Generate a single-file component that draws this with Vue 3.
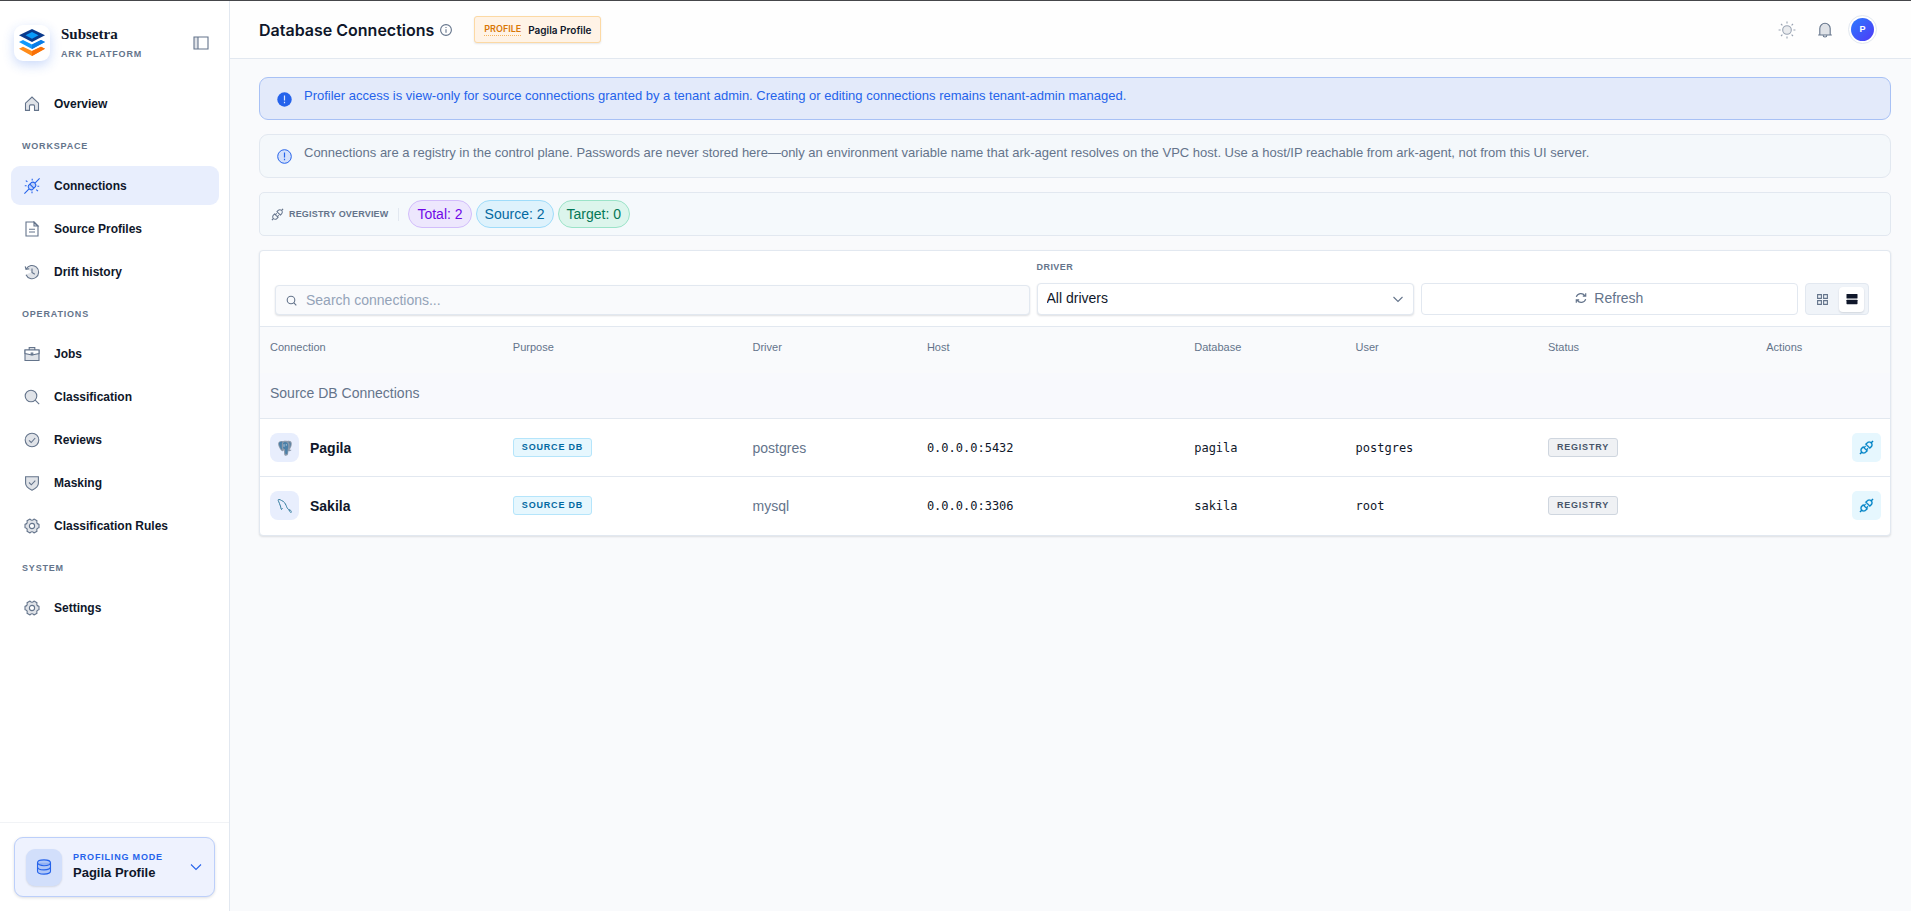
<script setup>
import { ref } from 'vue'

const search = ref('')
const driver = ref('all')

const navGroups = [
  { label: '', items: [{ name: 'Overview', icon: 'home' }] },
  {
    label: 'Workspace',
    items: [
      { name: 'Connections', icon: 'plug', active: true },
      { name: 'Source Profiles', icon: 'file' },
      { name: 'Drift history', icon: 'history' },
    ],
  },
  {
    label: 'Operations',
    items: [
      { name: 'Jobs', icon: 'jobs' },
      { name: 'Classification', icon: 'search' },
      { name: 'Reviews', icon: 'check' },
      { name: 'Masking', icon: 'shield' },
      { name: 'Classification Rules', icon: 'gear' },
    ],
  },
  { label: 'System', items: [{ name: 'Settings', icon: 'gear' }] },
]

const gear =
  '<path class="tone" fill-rule="evenodd" stroke-linejoin="round" d="M15 6.3V9.7Q12 10.3 13 13.2L10 14.900Q8 12.700 6 14.900L3 13.200Q4 10.300 1 9.700V6.300Q4 5.700 3 2.800L6 1.100Q8 3.300 10 1.100L13 2.800Q12 5.700 15 6.300zM8 5.400a2.600 2.600 0 1 0 0 5.200 2.600 2.600 0 0 0 0-5.200z"/>'

const icons = {
  home: '<path class="tone" d="M1.5 14.4V7.2L8 1.1l6.5 6.1v7.2h-4V9.9a1 1 0 0 0-1-1h-3a1 1 0 0 0-1 1v4.5z"/>',
  plug: '<path d="M.4 15.6 4.8 11.2M11.2 4.8 15.600.4"/><path class="tone" d="M4.6 7.3 7.3 4.6a3 3 0 0 1 4.100 4.100l-2.700 2.700a3 3 0 0 1-4.100-4.100z"/><path d="M5.800 6.200l4 4"/><path d="M1.800 2.600l1.600 1.200M.8 7.800h1.800M8.200.8v1.800M14 13.200l-1.800-1.600M15.200 8.200h-1.800M8 15.200v-1.800"/>',
  file: '<path d="M2 1h8l4 4v10H2z"/><path class="tone" d="M10 1v4h4z"/><path d="M5 8.2h6M5 11h6"/>',
  history: '<path class="tone" d="M2.3 4.8A6.5 6.5 0 1 1 2 10.6L8 8z" stroke="none"/><path d="M2.3 4.8A6.6 6.6 0 1 1 2 10.8M1.2 2.4l.8 3 3.2-.6M8 4.6V8.4l2.8 1.8"/>',
  jobs: '<path class="tone" d="M1 4h14v10.5H1z"/><path class="blank" d="M1 4h14v3.6L8 9 1 7.6z"/><path d="M5.2 4V1.6h5.6V4M7.2 7h1.6v1.8H7.2z"/>',
  search: '<circle class="tone" cx="7" cy="7" r="5.8"/><path d="m11.2 11.2 4 4"/>',
  check: '<circle class="tone" cx="8" cy="8" r="6.8"/><path d="m5 8.3 2.2 2.2L11.2 6"/>',
  shield: '<path class="tone" d="M1.6 1.8h12.8v6.4c0 3.4-3 5.4-6.4 7-3.4-1.6-6.4-3.6-6.4-7z"/><path d="m5 7.5 2.3 2.3 4-4.2"/>',
  gear,
}

const columns = ['Connection', 'Purpose', 'Driver', 'Host', 'Database', 'User', 'Status', 'Actions']

const rows = [
  { name: 'Pagila', driver: 'postgres', host: '0.0.0.0:5432', database: 'pagila', user: 'postgres' },
  { name: 'Sakila', driver: 'mysql', host: '0.0.0.0:3306', database: 'sakila', user: 'root' },
]

const apiPath =
  'M917.7 148.8l-42.4-42.4c-1.6-1.6-3.6-2.3-5.7-2.3s-4.1.8-5.7 2.3l-76.1 76.1a199.27 199.27 0 00-112.1-34.3c-51.2 0-102.4 19.5-141.5 58.6L432.3 308.7a8.03 8.03 0 000 11.3L704 591.7c1.6 1.6 3.6 2.3 5.7 2.3 2 0 4.1-.8 5.7-2.3l101.9-101.9c68.9-69 77-175.7 24.3-253.5l76.1-76.1c3.1-3.2 3.1-8.3 0-11.4zM769.1 441.7l-59.4 59.4-186.8-186.8 59.4-59.4c24.9-24.9 58.1-38.7 93.4-38.7 35.3 0 68.4 13.7 93.4 38.7 24.9 24.9 38.7 58.1 38.7 93.4 0 35.3-13.8 68.4-38.7 93.4zm-190.2 105a8.03 8.03 0 00-11.3 0L501 613.3 410.7 523l66.7-66.7c3.1-3.1 3.1-8.2 0-11.3L441 408.6a8.03 8.03 0 00-11.3 0L363 475.3l-43-43a7.85 7.85 0 00-5.7-2.3c-2 0-4.1.8-5.7 2.3L206.8 534.2c-68.9 69-77 175.7-24.3 253.5l-76.1 76.1a8.03 8.03 0 000 11.3l42.4 42.4c1.6 1.6 3.6 2.3 5.7 2.3s4.1-.8 5.7-2.3l76.1-76.1c33.7 22.9 72.9 34.3 112.1 34.3 51.2 0 102.4-19.5 141.5-58.6l101.9-101.9c3.1-3.1 3.1-8.2 0-11.3l-43-43 66.7-66.7c3.1-3.1 3.1-8.2 0-11.3l-36.6-36.2zM441.7 769.1a131.32 131.32 0 01-93.2 38.7c-35.3 0-68.4-13.7-93.4-38.7a131.32 131.32 0 01-38.7-93.4c0-35.3 13.7-68.4 38.7-93.4l59.4-59.4 186.8 186.8-59.6 59.4z'
</script>

<template>
  <div class="app">
    <aside class="sidebar">
      <div class="brand">
        <div class="logo">
          <svg width="26" height="27" viewBox="0 0 26 27" aria-hidden="true">
            <path d="M0 19.800 4 17.700 13 22 22 17.700 26 19.800 13 27z" fill="#ff8c1a" />
            <path d="M13 22 22 17.700 26 19.800 13 27z" fill="#f97008" />
            <path d="M0 13 4 10.900 13 15.400 22 10.900 26 13 13 20z" fill="#1199fb" />
            <path d="M13 15.400 22 10.900 26 13 13 20z" fill="#0b7de6" />
            <path d="M0 6.200 13 0l13 6.200-13 6.900z" fill="#0a3a8c" />
            <path d="M6.500 6.200 13 2.900l6.500 3.300L13 9.800z" fill="#0a9bfa" />
          </svg>
        </div>
        <div class="brand-text">
          <strong>Subsetra</strong>
          <span class="caps">ARK PLATFORM</span>
        </div>
        <button class="bare" type="button" aria-label="Collapse sidebar">
          <svg class="ico" width="16" height="16" viewBox="0 0 16 16">
            <path class="tone" stroke="none" d="M1 2h4v12H1z" />
            <path d="M1 2h14v12H1zM5 2v12" />
          </svg>
        </button>
      </div>

      <nav>
        <template v-for="group in navGroups" :key="group.label">
          <h2 v-if="group.label" class="caps group-label">{{ group.label.toUpperCase() }}</h2>
          <ul>
            <li v-for="item in group.items" :key="item.name">
              <a href="#" :class="{ active: item.active }">
                <svg class="ico" width="16" height="16" viewBox="0 0 16 16" aria-hidden="true" v-html="icons[item.icon]"></svg>
                {{ item.name }}
              </a>
            </li>
          </ul>
        </template>
      </nav>

      <div class="mode-wrap">
        <button class="mode" type="button">
          <span class="mode-icon">
            <svg class="ico" width="16" height="16" viewBox="0 0 16 16">
              <path class="tone" d="M1.500 3.800v8.400c0 1.700 2.900 2.900 6.500 2.900s6.500-1.200 6.500-2.900V3.800" />
              <ellipse class="tone" cx="8" cy="3.800" rx="6.500" ry="2.900" />
              <path d="M1.500 8c0 1.700 2.900 2.900 6.500 2.900s6.500-1.200 6.500-2.900" />
            </svg>
          </span>
          <span class="mode-text">
            <span class="caps">PROFILING MODE</span>
            <strong>Pagila Profile</strong>
          </span>
          <svg class="ico" width="12" height="12" viewBox="0 0 12 12"><path d="m1 3.500 5 5 5-5" /></svg>
        </button>
      </div>
    </aside>

    <div class="page">
      <header class="topbar">
        <h1>Database Connections</h1>
        <button class="bare info" type="button" aria-label="About this page">
          <svg class="ico" width="12" height="12" viewBox="0 0 12 12">
            <circle cx="6" cy="6" r="5.400" /><path d="M6 5.200v3.600M6 3v1" />
          </svg>
        </button>
        <div class="profile-chip"><abbr title="Active profile">PROFILE</abbr><span>Pagila Profile</span></div>
        <div class="top-actions">
          <button class="bare sun" type="button" aria-label="Toggle theme">
            <svg class="ico" width="18" height="18" viewBox="0 0 18 18">
              <circle class="tone" cx="9" cy="9" r="4.300" />
              <path d="M9 .6v2M9 15.400v2M.6 9h2M15.400 9h2M3 3l1.400 1.400M13.600 13.600 15 15M3 15l1.400-1.400M13.600 4.400 15 3" />
            </svg>
          </button>
          <button class="bare" type="button" aria-label="Notifications">
            <svg class="ico" width="16" height="16" viewBox="0 0 16 16">
              <path class="tone" d="M1.200 13h13.600M2.800 13V6.500A5.200 5.200 0 0 1 8 1.300a5.200 5.200 0 0 1 5.200 5.200V13" />
              <path d="M6.200 13.200a1.800 1.800 0 0 0 3.600 0" />
            </svg>
          </button>
          <button class="avatar" type="button" aria-label="Account"><span>P</span></button>
        </div>
      </header>

      <main>
        <div class="alert primary" role="status">
          <svg width="15" height="15" viewBox="0 0 15 15" aria-hidden="true">
            <circle cx="7.500" cy="7.500" r="7.200" fill="#2563eb" />
            <path d="M7.500 3.600v4.800M7.500 9.800v1.500" stroke="#dbe6ff" stroke-width="1.200" />
          </svg>
          <p>Profiler access is view-only for source connections granted by a tenant admin. Creating or editing connections remains tenant-admin managed.</p>
        </div>
        <div class="alert" role="note">
          <svg width="15" height="15" viewBox="0 0 15 15" aria-hidden="true">
            <circle cx="7.500" cy="7.500" r="6.800" fill="#d3e0fb" stroke="#2563eb" />
            <path d="M7.500 3.600v4.800M7.500 9.800v1.500" stroke="#2563eb" stroke-width="1.200" />
          </svg>
          <p>Connections are a registry in the control plane. Passwords are never stored here—only an environment variable name that ark-agent resolves on the VPC host. Use a host/IP reachable from ark-agent, not from this UI server.</p>
        </div>

        <section class="overview">
          <svg width="13" height="13" viewBox="64 64 896 896" fill="#64748b" aria-hidden="true"><path :d="apiPath" /></svg>
          <h2>REGISTRY OVERVIEW</h2>
          <span class="rule"></span>
          <span class="pill violet">Total: 2</span>
          <span class="pill sky">Source: 2</span>
          <span class="pill green">Target: 0</span>
        </section>

        <section class="card">
          <div class="toolbar">
            <div class="search">
              <svg class="ico" width="11" height="11" viewBox="0 0 11 11" aria-hidden="true"><circle cx="5" cy="5" r="3.800" /><path d="m7.700 7.700 2.600 2.600" /></svg>
              <input v-model="search" type="search" placeholder="Search connections..." aria-label="Search connections" />
            </div>
            <div class="driver">
              <label for="driver">DRIVER</label>
              <div class="select">
                <select id="driver" v-model="driver">
                  <option value="all">All drivers</option>
                  <option value="postgres">postgres</option>
                  <option value="mysql">mysql</option>
                </select>
                <svg class="ico" width="12" height="12" viewBox="0 0 12 12" aria-hidden="true"><path d="m1.500 4 4.500 4.500L10.500 4" /></svg>
              </div>
            </div>
            <button class="refresh" type="button">
              <svg width="12" height="12" viewBox="0 0 12 12" fill="none" stroke="currentColor" stroke-width="1.200" aria-hidden="true">
                <path d="M1.300 4.900A4.800 4.800 0 0 1 9.800 3.700M10.700 1.200v3H7.800M10.700 7.100A4.800 4.800 0 0 1 2.200 8.300M1.300 10.800v-3h2.900" />
              </svg>
              Refresh
            </button>
            <div class="views" role="group" aria-label="View">
              <button type="button" aria-label="Grid view">
                <svg width="11" height="11" viewBox="0 0 11 11" fill="none" stroke="#64748b" stroke-width="1.100">
                  <path d="M.6.6h3.800v3.800H.6zM6.600.6h3.800v3.800H6.600zM.6 6.600h3.800v3.800H.6zM6.600 6.600h3.800v3.800H6.600z" />
                </svg>
              </button>
              <button type="button" class="on" aria-label="Table view" aria-pressed="true">
                <svg width="12" height="12" viewBox="0 0 12 12" fill="#0f172a"><rect x=".5" y="1" width="11" height="4.500" rx=".6" /><rect x=".5" y="6.700" width="11" height="4.500" rx=".6" /></svg>
              </button>
            </div>
          </div>

          <table>
            <colgroup><col v-for="c in columns" :key="c" :class="'c-' + c.toLowerCase()" /></colgroup>
            <thead>
              <tr><th v-for="c in columns" :key="c" scope="col">{{ c }}</th></tr>
            </thead>
            <tbody>
              <tr class="group"><td colspan="8">Source DB Connections</td></tr>
              <tr v-for="row in rows" :key="row.name">
                <td>
                  <div class="name">
                    <span class="db">
                      <svg v-if="row.driver === 'postgres'" width="16" height="16" viewBox="0 0 16 16" aria-hidden="true">
                        <path d="M1.200 3.200C1.600 1.200 4.400.6 6 1.200c1.400-.6 3-.6 4.200-.1 1.800-.7 4.600-.2 4.600 2.300 0 2.200-.9 4.400-2.200 6.200.6.500 1.600.2 1.900.4-.6 1-2 1.300-3.200 1.200-.1 1.700.1 3.700-1.500 4.400-1.700.6-2.700-.7-2.700-2.200l-.2-3.200c-.8.900-1.400 1.200-2 .8C3 9.600.8 5.400 1.200 3.200z" fill="#8d9aab" />
                        <path d="M2 3.300C2.400 1.900 4.300 1.500 5.500 2c-.6.900-.8 2-.7 3.200.1 1.300-.2 2.700.4 3.900-.2.500-.6.800-.8.500C3.200 7.800 1.700 5 2 3.300zM6 3.200c1-1.600 3.300-1.600 4.300-.4 1.100 1.400 1.100 4.200.6 6-.4 1.600-.1 3.600-.7 5-.6.900-1.900.5-2-.8L8 9.300C6.400 9 5.800 7.600 6 6z" fill="#4b80a8" />
                        <path d="M11.400 2c1.400-.3 2.600.2 2.600 1.600 0 1.800-.7 3.300-1.500 4.600.4-2.300.4-4.700-1.100-6.200z" fill="#5c83a3" />
                        <path d="M7 4.200v2.600M9.300 4.200v1.400" stroke="#e3ebf5" stroke-width=".7" />
                      </svg>
                      <svg v-else width="16" height="16" viewBox="0 0 16 16" fill="none" stroke="#2f7a9c" aria-hidden="true">
                        <path d="M4.500 11.500C3.600 10.600 4 9.200 3.400 8 2.600 6.500 2.400 4.600 1.500 3.200 1 2.200 1 1.300 2 1.500c1.500.1 2 .8 2.900 1.200 2 .6 3.300 2.700 4.200 4.700.7 1.700 1 3.100 2.400 4 1.500.6 2.500 1 3.200 2.100M11.800 11.800l1 1.600 1.600 1.600M4.500 11.500l.9-1.500" />
                      </svg>
                    </span>
                    <strong>{{ row.name }}</strong>
                  </div>
                </td>
                <td><span class="tag blue">SOURCE DB</span></td>
                <td class="muted">{{ row.driver }}</td>
                <td class="mono">{{ row.host }}</td>
                <td class="mono">{{ row.database }}</td>
                <td class="mono">{{ row.user }}</td>
                <td><span class="tag">REGISTRY</span></td>
                <td>
                  <button class="test" type="button" :aria-label="'Test ' + row.name">
                    <svg width="15" height="15" viewBox="64 64 896 896" fill="#0284c7" aria-hidden="true"><path :d="apiPath" stroke="#0284c7" stroke-width="16" /></svg>
                  </button>
                </td>
              </tr>
            </tbody>
          </table>
        </section>
      </main>
    </div>
  </div>
</template>

<style>
body {
  background: #f9fafc;
}
</style>

<style scoped>
.app,
.app :deep(*) {
  box-sizing: border-box;
}
.app {
  display: flex;
  min-height: 100vh;
  border-top: 1px solid #45464a;
  color: #0f172a;
  font-family: 'Liberation Sans', Arial, sans-serif;
  font-size: 14px;
}
h1, h2, p, ul {
  margin: 0;
  padding: 0;
}
ul {
  list-style: none;
}
button {
  font: inherit;
  color: inherit;
  cursor: pointer;
}
.bare {
  display: flex;
  padding: 0;
  border: 0;
  background: none;
  color: #64748b;
}
.ico {
  flex: none;
  fill: none;
  stroke: currentColor;
  stroke-width: 1.1;
}
.ico :deep(.tone),
.ico .tone {
  fill: currentColor;
  fill-opacity: 0.2;
}
.ico :deep(.blank) {
  fill: #fff;
}
.caps {
  font-size: 9px;
  font-weight: 700;
  line-height: 15px;
  letter-spacing: 0.09em;
  color: #64748b;
}

/* Sidebar */
.sidebar {
  display: flex;
  flex: none;
  flex-direction: column;
  width: 230px;
  border-right: 1px solid #e2e8f0;
  background: #fff;
}
.brand {
  display: flex;
  align-items: center;
  height: 83px;
  padding: 0 20px 0 14px;
}
.logo {
  display: grid;
  place-items: center;
  width: 36px;
  height: 36px;
  border-radius: 9px;
  background: #fff;
  box-shadow: 0 4px 12px rgba(37, 99, 235, 0.24);
}
.brand-text {
  display: flex;
  flex: 1;
  flex-direction: column;
  gap: 2px;
  margin-left: 11px;
}
.brand-text strong {
  font: 700 15px/22px 'Liberation Serif', 'Times New Roman', serif;
}
nav {
  flex: 1;
  padding: 0 10px 0 11px;
}
.group-label {
  margin: 16px 0 12px 11px;
}
nav ul {
  display: grid;
  gap: 4px;
}
nav a {
  display: flex;
  align-items: center;
  gap: 14px;
  height: 39px;
  padding: 0 13px;
  border-radius: 9px;
  color: #0f172a;
  font-size: 12px;
  font-weight: 700;
  text-decoration: none;
}
nav a .ico {
  color: #64748b;
}
nav a.active {
  background: #e8eefd;
}
nav a.active .ico {
  color: #2563eb;
}
.mode-wrap {
  padding: 14px;
  border-top: 1px solid #f1f3f6;
}
.mode {
  display: flex;
  align-items: center;
  width: 100%;
  height: 60px;
  padding: 0 12px 0 11px;
  border: 1px solid #bccffa;
  border-radius: 9px;
  background: #eef2fe;
  box-shadow: 0 1px 3px rgba(15, 23, 42, 0.14);
  color: #2563eb;
  text-align: left;
}
.mode-icon {
  display: grid;
  place-items: center;
  width: 36px;
  height: 37px;
  border-radius: 9px;
  background: #d2dffb;
  box-shadow: 0 1px 2px rgba(15, 23, 42, 0.12);
}
.mode-text {
  display: flex;
  flex: 1;
  flex-direction: column;
  margin-left: 11px;
  padding-bottom: 4px;
}
.mode-text .caps {
  color: #2563eb;
}
.mode-text strong {
  color: #0f172a;
  font-size: 13px;
  line-height: 16px;
}

/* Header */
.page {
  flex: 1;
  min-width: 0;
}
.topbar {
  display: flex;
  align-items: center;
  height: 58px;
  padding: 0 34px 0 29px;
  border-bottom: 1px solid #e2e8f0;
  background: #fefefe;
}
h1 {
  font: 600 16px/24px Inter, sans-serif;
}
.info {
  margin: 0 22px 0 6px;
}
.profile-chip {
  display: flex;
  align-items: center;
  gap: 7px;
  height: 27px;
  padding: 0 9px;
  border: 1px solid #fcd9a4;
  border-radius: 3px;
  background: #fff3e6;
  box-shadow: 0 1px 2px rgba(15, 23, 42, 0.1);
  font: 600 9px/12px Inter, sans-serif;
}
.profile-chip span {
  font-size: 10px;
}
.profile-chip abbr {
  border-bottom: 1px dotted #f5b45c;
  color: #d97706;
  text-decoration: none;
}
.top-actions {
  display: flex;
  align-items: center;
  gap: 15px;
  margin-left: auto;
}
.sun {
  margin-right: 6px;
  opacity: 0.65;
}
.avatar {
  width: 29px;
  height: 29px;
  padding: 2px;
  border: 1px solid #e2e8f0;
  border-radius: 50%;
  background: #fff;
}
.avatar span {
  display: block;
  border-radius: 50%;
  background: linear-gradient(135deg, #2b7bff, #4f39f6);
  color: #fff;
  font: 700 9px/23px 'Liberation Sans', Arial, sans-serif;
}

/* Content */
main {
  display: grid;
  gap: 14px;
  padding: 18px 20px 20px 29px;
}
.alert {
  display: flex;
  gap: 12px;
  min-height: 44px;
  padding: 9px 16px 10px 17px;
  border: 1px solid #e2e8f0;
  border-radius: 9px;
  background: #f4f8fb;
  color: #64748b;
}
.alert svg {
  flex: none;
  margin-top: 5px;
}
.alert p {
  font-size: 13px;
  line-height: 18px;
}
.alert.primary {
  min-height: 43px;
  border-color: #a8c1f5;
  background: #e3eafa;
  color: #2563eb;
}
.overview {
  display: flex;
  align-items: center;
  gap: 4px;
  min-height: 44px;
  padding: 0 11px;
  border: 1px solid #e2e8f0;
  border-radius: 5px;
  background: #f5f9fc;
}
.overview h2 {
  margin-left: 1px;
  color: #64748b;
  font-size: 9px;
  letter-spacing: 0.02em;
}
.rule {
  width: 1px;
  height: 13px;
  margin: 0 5px 0 6px;
  background: #e2e8f0;
}
.pill {
  padding: 0 8px;
  border: 1px solid;
  border-radius: 14px;
  font-size: 14px;
  line-height: 26px;
}
.violet {
  border-color: #d2bdfb;
  background: #ede7fd;
  color: #7008e7;
}
.sky {
  border-color: #9fdcfa;
  background: #def2fc;
  color: #0369a1;
}
.green {
  border-color: #9be3c8;
  background: #dcf5ec;
  color: #047857;
}

.card {
  border: 1px solid #e2e8f0;
  border-radius: 4px;
  background: #fff;
  box-shadow: 0 1px 2px rgba(15, 23, 42, 0.12);
  overflow: hidden;
}
.toolbar {
  display: grid;
  grid-template-columns: 2fr 1fr 1fr auto;
  align-items: end;
  gap: 7px;
  padding: 10px 21px 11px 15px;
}
.search,
.select select,
.refresh,
.views {
  border: 1px solid #e2e8f0;
  border-radius: 4px;
}
.search {
  display: flex;
  align-items: center;
  gap: 9px;
  height: 30px;
  padding: 0 10px;
  background: #f9fafc;
  box-shadow: 0 1px 2px rgba(15, 23, 42, 0.14);
  color: #64748b;
}
.search input {
  flex: 1;
  min-width: 0;
  padding: 0;
  border: 0;
  outline: 0;
  background: none;
  font: 14px/18px 'Liberation Sans', Arial, sans-serif;
}
.search input::placeholder {
  color: #94a3b8;
}
.driver label {
  display: block;
  margin-bottom: 9px;
  color: #64748b;
  font-size: 9px;
  font-weight: 700;
  line-height: 13px;
  letter-spacing: 0.05em;
}
.select {
  position: relative;
}
.select select {
  display: block;
  width: 100%;
  height: 32px;
  padding: 0 28px 2px 9px;
  appearance: none;
  background: #fff;
  box-shadow: 0 1px 2px rgba(15, 23, 42, 0.14);
  color: #0f172a;
  font: 14px/18px 'Liberation Sans', Arial, sans-serif;
}
.select .ico {
  position: absolute;
  top: 10px;
  right: 10px;
  color: #64748b;
  pointer-events: none;
}
.refresh {
  display: flex;
  align-items: center;
  justify-content: center;
  gap: 7px;
  height: 32px;
  padding: 0 0 2px;
  background: #fff;
  color: #64748b;
  font-size: 14px;
}
.views {
  display: flex;
  align-items: center;
  gap: 4px;
  height: 32px;
  padding: 0 4px;
  background: #f0f4f9;
}
.views button {
  display: grid;
  place-items: center;
  width: 25px;
  height: 25px;
  padding: 0;
  border: 0;
  border-radius: 4px;
  background: none;
}
.views .on {
  background: #fff;
  box-shadow: 0 1px 2px rgba(15, 23, 42, 0.14);
}

table {
  width: 100%;
  border-collapse: collapse;
  table-layout: fixed;
  border-top: 1px solid #e2e8f0;
}
.c-connection { width: 14.9%; }
.c-purpose { width: 14.7%; }
.c-driver { width: 10.7%; }
.c-host { width: 16.4%; }
.c-database { width: 9.9%; }
.c-user { width: 11.8%; }
.c-status { width: 13.4%; }
.c-actions { width: 8.2%; }
th,
td {
  padding: 0 9px 0 10px;
  text-align: left;
}
th {
  height: 46px;
  padding-bottom: 5px;
  background: #f9fafc;
  color: #64748b;
  font-size: 11px;
  font-weight: 400;
}
td {
  height: 58px;
}
tr + tr td {
  border-top: 1px solid #e2e8f0;
}
.group td {
  height: 46px;
  padding-bottom: 4px;
  background: #f8f9fd;
  color: #64748b;
  font-size: 14px;
}
.name {
  display: flex;
  align-items: center;
  gap: 11px;
}
.db {
  display: grid;
  place-items: center;
  width: 29px;
  height: 29px;
  border-radius: 8px;
  background: #e8eefd;
}
.muted {
  color: #64748b;
}
.mono {
  font-family: Consolas, 'DejaVu Sans Mono', monospace;
  font-size: 12px;
}
.tag {
  display: inline-block;
  padding: 0 8px;
  border: 1px solid #cfd6df;
  border-radius: 3px;
  background: #eff1f4;
  color: #475569;
  font-size: 9px;
  font-weight: 700;
  line-height: 17px;
  letter-spacing: 0.09em;
  vertical-align: middle;
}
.tag.blue {
  border-color: #b5e5fb;
  background: #e6f7fe;
  color: #0369a1;
}
.test {
  display: grid;
  place-items: center;
  width: 29px;
  height: 29px;
  margin-left: auto;
  padding: 0;
  border: 0;
  border-radius: 5px;
  background: #e6f7fe;
}
</style>
